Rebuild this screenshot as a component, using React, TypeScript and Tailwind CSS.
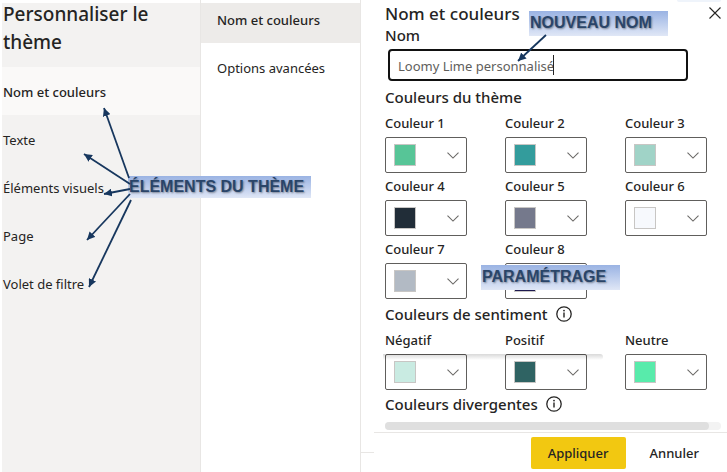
import { useState } from "react";

type Swatch = { id: string; label: string; color: string };

type Arrow = { from: [number, number]; to: [number, number] };

const SECTIONS = [
  "Nom et couleurs",
  "Texte",
  "Éléments visuels",
  "Page",
  "Volet de filtre",
];

const THEME_COLORS: Swatch[] = [
  { id: "c1", label: "Couleur 1", color: "#57c597" },
  { id: "c2", label: "Couleur 2", color: "#339c9c" },
  { id: "c3", label: "Couleur 3", color: "#a0d3c7" },
  { id: "c4", label: "Couleur 4", color: "#212d38" },
  { id: "c5", label: "Couleur 5", color: "#75798c" },
  { id: "c6", label: "Couleur 6", color: "#f7f9fd" },
  { id: "c7", label: "Couleur 7", color: "#b2bac4" },
  { id: "c8", label: "Couleur 8", color: "#1f1a50" },
];

const SENTIMENT_COLORS: Swatch[] = [
  { id: "neg", label: "Négatif", color: "#c9ebe2" },
  { id: "pos", label: "Positif", color: "#2f6363" },
  { id: "neu", label: "Neutre", color: "#58ebab" },
];

const ARROWS: Arrow[] = [
  { from: [129, 178], to: [104, 108] },
  { from: [130, 184], to: [84, 154] },
  { from: [130, 189], to: [104, 194] },
  { from: [130, 194], to: [87, 240] },
  { from: [131, 200], to: [89, 287] },
  { from: [546, 35], to: [518, 61] },
];

function ChevronIcon() {
  return (
    <svg width="12" height="7" viewBox="0 0 12 7" fill="none" aria-hidden="true">
      <path d="M0.5 0.7 6 6.1 11.5 0.7" stroke="#6b6967" strokeWidth="1.1" />
    </svg>
  );
}

function InfoIcon() {
  return (
    <svg width="16" height="16" viewBox="0 0 16 16" fill="none" aria-hidden="true">
      <circle cx="8" cy="8" r="7.2" stroke="#252423" strokeWidth="1.3" />
      <path d="M8 6.6v5" stroke="#252423" strokeWidth="1.4" />
      <circle cx="8" cy="4.6" r="0.9" fill="#252423" />
    </svg>
  );
}

function ColorSelect({ id, label, color }: Swatch) {
  return (
    <div>
      <label htmlFor={id} className="block pb-0.5 text-[13px] leading-6 font-medium">
        {label}
      </label>
      <div className="grid h-9 items-center">
        <select
          id={id}
          defaultValue={color}
          className="col-start-1 row-start-1 h-9 w-full appearance-none rounded-xs border border-[#605e5c] bg-transparent"
        >
          <option value={color} aria-label={color} />
        </select>
        <div className="pointer-events-none col-start-1 row-start-1 flex items-center justify-between pr-2 pl-[9px]">
          <span
            className="size-[22px] border border-[#c8c6c4]"
            style={{ backgroundColor: color }}
          />
          <ChevronIcon />
        </div>
      </div>
    </div>
  );
}

function ColorGrid({ colors }: { colors: Swatch[] }) {
  return (
    <div className="grid grid-cols-[repeat(3,82px)] justify-between gap-y-px">
      {colors.map((c) => (
        <ColorSelect key={c.id} {...c} />
      ))}
    </div>
  );
}

function Callout({ text, className }: { text: string; className: string }) {
  return (
    <div
      className={`absolute bg-linear-to-b from-[#9ab3e3] to-[#e0e7f6] px-px font-['Liberation_Sans',Arial,sans-serif] text-base font-bold whitespace-nowrap text-[#2a4569] text-shadow-[1px_1px_2px_#00000066] ${className}`}
    >
      {text}
    </div>
  );
}

/* Straight connectors from the callouts to the items they name. */
function Arrows() {
  return (
    <svg
      width="727"
      height="472"
      viewBox="0 0 727 472"
      className="pointer-events-none absolute top-0 left-0"
      aria-hidden="true"
    >
      <defs>
        <marker
          id="head"
          viewBox="0 0 8 8"
          refX="8"
          refY="4"
          markerWidth="8"
          markerHeight="8"
          markerUnits="userSpaceOnUse"
          orient="auto"
        >
          <path d="M0 0 8 4 0 8z" fill="#17375e" />
        </marker>
      </defs>
      {ARROWS.map(({ from, to }) => (
        <line
          key={to.join()}
          x1={from[0]}
          y1={from[1]}
          x2={to[0]}
          y2={to[1]}
          stroke="#17375e"
          strokeWidth="1.8"
          markerEnd="url(#head)"
        />
      ))}
    </svg>
  );
}

export default function App() {
  const [section, setSection] = useState("Nom et couleurs");
  const [name, setName] = useState("Loomy Lime personnalisé");

  return (
    <div className="relative flex min-h-screen bg-white pl-0.5 font-['Noto_Sans','Open_Sans',sans-serif] text-[13px] text-[#252423]">
      <nav className="w-[199px] shrink-0 border-r border-[#e8e6e4] bg-[#f3f2f1] shadow-[inset_0_3px_white]">
        <h1 className="pb-[11px] pl-px text-[19px] leading-7 font-medium">
          Personnaliser le
          <br />
          thème
        </h1>
        {SECTIONS.map((s) => (
          <button
            key={s}
            type="button"
            onClick={() => setSection(s)}
            className={[
              "block h-12 w-full pt-1 pl-px text-left",
              s === section ? "bg-[#faf9f8] font-medium" : "",
            ].join(" ")}
          >
            {s}
          </button>
        ))}
      </nav>

      <div className="w-40 shrink-0 border-r border-[#e8e6e4] pt-[3px]">
        <button
          type="button"
          className="block w-full bg-[#edebe9] px-4 pt-[7px] pb-[13px] text-left leading-5 font-medium"
        >
          Nom et couleurs
        </button>
        <button type="button" className="block h-12 w-full px-4 pt-1 text-left">
          Options avancées
        </button>
      </div>

      <div className="flex w-[13px] shrink-0 flex-col justify-end">
        <div className="h-5 border-t border-[#e8e6e4]" />
      </div>

      <main className="flex min-w-0 flex-1 flex-col">
        <div className="flex-1 pr-5 pl-[11px]">
          <h2 className="text-[17px] leading-7 font-medium">Nom et couleurs</h2>
          <label htmlFor="name" className="block text-[15px] leading-[14px] font-medium">
            Nom
          </label>
          <div className="relative mt-[7px] mr-[19px] ml-[3px]">
            <input
              id="name"
              value={name}
              onChange={(e) => setName(e.target.value)}
              className="block h-8 w-full rounded-sm border-2 border-[#111] px-2 pt-0.5 text-[13px] text-[#605e5c] outline-none"
            />
            <span className="pointer-events-none absolute inset-y-1.5 left-[165px] w-px bg-[#252423]" />
          </div>

          <h3 className="pt-1 pb-0.5 text-[15px] leading-6 font-medium">
            Couleurs du thème
          </h3>
          <ColorGrid colors={THEME_COLORS} />

          <h3 className="flex items-center gap-2 pt-px text-[15px] leading-7 font-medium">
            Couleurs de sentiment
            <InfoIcon />
          </h3>
          <div className="relative">
            <ColorGrid colors={SENTIMENT_COLORS} />
            <div className="pointer-events-none absolute top-[26px] right-[104px] -left-0.5 h-1.5 rounded-r-full bg-linear-to-b from-black/15 to-transparent" />
          </div>
          <h3 className="flex items-center gap-2 text-[15px] leading-7 font-medium">
            Couleurs divergentes
            <InfoIcon />
          </h3>
        </div>

        <div className="mr-1.5 mb-0.5 ml-[11px] h-2 rounded-full bg-[#f3f3f3] pr-3">
          <div className="h-2 rounded-full bg-[#dfdfdf]" />
        </div>
        <footer className="flex justify-end gap-2 border-t border-[#e8e6e4] pt-1 pr-3 pb-[3px]">
          <button
            type="button"
            className="h-8 w-[95px] rounded-xs bg-[#f2c811] pt-0.5 font-medium"
          >
            Appliquer
          </button>
          <button type="button" className="h-8 px-4 pt-0.5 font-medium">
            Annuler
          </button>
        </footer>
      </main>

      <button type="button" aria-label="Fermer" className="absolute top-[7px] right-1.5">
        <svg width="12" height="12" viewBox="0 0 12 12" fill="none" aria-hidden="true">
          <path d="M0.5 0.5l11 11M11.5 0.5l-11 11" stroke="#252423" strokeWidth="1.1" />
        </svg>
      </button>
      <div className="pointer-events-none absolute top-0 right-1.5 h-0.5 w-11 rounded-b-full bg-[#eff4fb]" />

      <Callout text="ÉLÉMENTS DU THÈME" className="top-44 left-32 w-[183px] leading-[22px]" />
      <Callout text="NOUVEAU NOM" className="top-[11px] left-[529px] w-[139px] pb-0.5 leading-[23px]" />
      <Callout text="PARAMÉTRAGE" className="top-[265px] left-[481px] w-[139px] pb-0.5 leading-[23px]" />
      <Arrows />
    </div>
  );
}
